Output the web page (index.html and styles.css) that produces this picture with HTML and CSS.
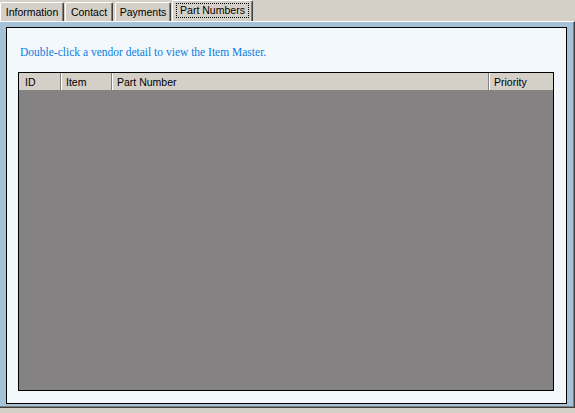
FILE: index.html
```html
<!DOCTYPE html>
<html>
<head>
<meta charset="utf-8">
<link rel="stylesheet" href="styles.css">
</head>
<body>
<div class="tabs">
  <div class="tab tab-info">Information</div>
  <div class="tab tab-contact">Contact</div>
  <div class="tab tab-payments">Payments</div>
  <div class="tab tab-parts selected"><span class="focus">Part Numbers</span></div>
</div>
<div class="panel">
  <div class="inner">
    <p class="hint">Double-click a vendor detail to view the Item Master.</p>
    <div class="grid">
      <div class="header">
        <div class="col col-id">ID</div>
        <div class="col col-item">Item</div>
        <div class="col col-part">Part Number</div>
        <div class="col col-prio">Priority</div>
      </div>
      <div class="body"></div>
    </div>
  </div>
</div>
</body>
</html>
```

FILE: styles.css
```css
html, body {
  margin: 0;
  padding: 0;
}
body {
  width: 575px;
  height: 413px;
  overflow: hidden;
  background: #d4d0c8;
  font-family: "Liberation Sans", Arial, sans-serif;
  font-size: 10.5px;
  color: #000;
}
.tabs {
  display: flex;
  align-items: flex-end;
  height: 21px;
}
.tab {
  box-sizing: border-box;
  height: 19px;
  padding-top: 3px;
  line-height: 13px;
  text-align: center;
  white-space: nowrap;
  border-top: 1px solid #fff;
  border-left: 1px solid #fff;
  border-right: 1px solid #404040;
  box-shadow: inset -1px 0 0 #808080;
  border-radius: 2px 2px 0 0;
}
.tab-info { width: 64px; margin-right: 1px; }
.tab-contact { width: 48px; margin-right: 2px; }
.tab-payments { width: 56px; margin-right: 1px; }
.tab-parts { width: 81px; }
.tab.selected {
  height: 21px;
  padding-top: 2px;
}
.focus {
  display: inline-block;
  border: 1px dotted #000;
  padding: 0 3px;
  line-height: 13px;
}
.panel {
  box-sizing: border-box;
  width: 575px;
  height: 387px;
  border-top: 1px solid #fff;
  border-right: 1px solid #404040;
  border-bottom: 1px solid #404040;
  box-shadow: inset -1px -1px 0 #808080;
  background: #a6c2d6;
  padding: 5px 7px 3px 6px;
}
.inner {
  box-sizing: border-box;
  height: 377px;
  border: 1px solid #000;
  background: #f2f8fc;
  padding: 17px 12px 0 11px;
}
.hint {
  margin: 0 0 13px 2px;
  font-family: "Liberation Serif", "Times New Roman", serif;
  font-size: 11.5px;
  line-height: 14px;
  color: #0b7ddf;
}
.grid {
  box-sizing: border-box;
  height: 319px;
  border: 1px solid #000;
  background: #858284;
  display: flex;
  flex-direction: column;
}
.header {
  display: grid;
  grid-template-columns: 42px 51px 377px 1fr;
  height: 17px;
  background: #d4d0c8;
}
.col {
  box-sizing: border-box;
  padding: 1px 0 0 5px;
  line-height: 16px;
  white-space: nowrap;
  border-left: 1px solid #fff;
  border-right: 1px solid #808080;
}
.col-id { border-left: 0; padding-left: 6px; }
.col-item { padding-left: 4px; }
.col-part { padding-left: 4px; }
.col-prio { border-right: 0; padding-left: 4px; }
.body {
  flex: 1;
}
```
